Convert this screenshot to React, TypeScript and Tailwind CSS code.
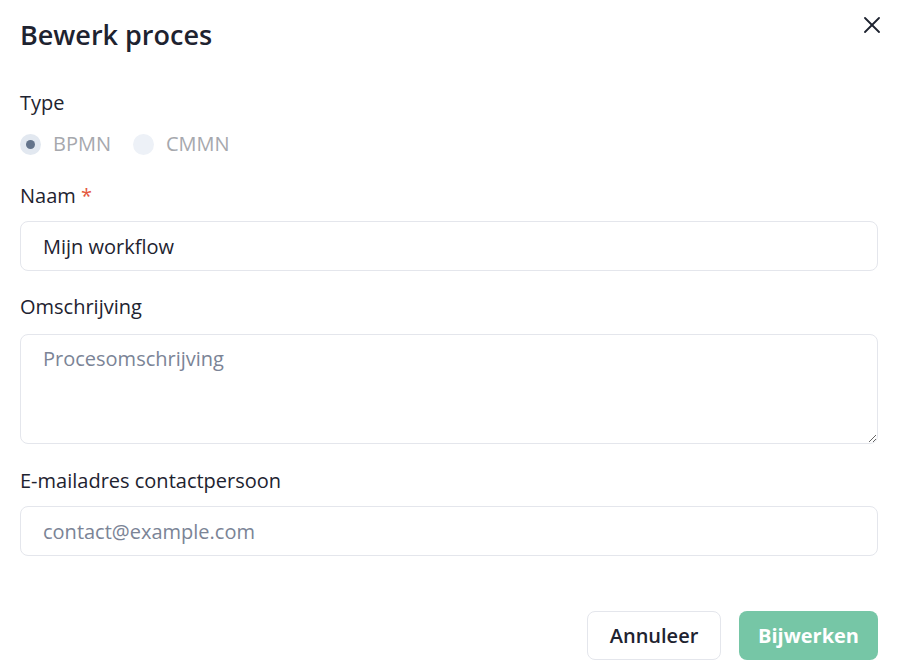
export default function App() {
  return (
    <div
      className="w-[901px] h-[672px] bg-white text-[#1e2330] overflow-hidden"
      style={{ fontFamily: '"Open Sans", sans-serif' }}
    >
      <div className="pl-5 pr-[23px] pt-[17px]">
        <div className="flex items-start justify-between">
          <h1 className="text-[27px] leading-[36px] font-semibold">Bewerk proces</h1>
          <button className="-mr-[2px] text-[#1e2330]">
            <svg width="16" height="16" viewBox="0 0 16 16" fill="none" stroke="currentColor" strokeWidth="1.8" strokeLinecap="round">
              <line x1="1" y1="1" x2="15" y2="15" />
              <line x1="15" y1="1" x2="1" y2="15" />
            </svg>
          </button>
        </div>

        <div className="mt-9">
          <div className="text-xl leading-[28px]">Type</div>
          <div className="mt-[13px] flex items-center text-xl leading-[28px] text-[#a6a8ad]">
            <label className="flex items-center gap-3">
              <span className="w-[21px] h-[21px] rounded-full bg-[#e2e8f0] flex items-center justify-center">
                <span className="w-[9px] h-[9px] rounded-full bg-[#64748b]" />
              </span>
              BPMN
            </label>
            <label className="ml-[22px] flex items-center gap-3">
              <span className="w-[21px] h-[21px] rounded-full bg-[#edf1f7]" />
              CMMN
            </label>
          </div>
        </div>

        <div className="mt-6">
          <div className="text-xl leading-[28px]">
            Naam <span className="text-[#e4573d]">*</span>
          </div>
          <input
            className="mt-[11px] block w-full h-[50px] rounded-lg border border-[#e4e6ec] px-[22px] text-xl outline-none"
            defaultValue="Mijn workflow"
          />
        </div>

        <div className="mt-[22px]">
          <div className="text-xl leading-[28px]">Omschrijving</div>
          <textarea
            className="mt-[13px] block w-full h-[110px] rounded-lg border border-[#e4e6ec] px-[22px] py-[10px] text-xl outline-none placeholder:text-[#7b8496]"
            placeholder="Procesomschrijving"
          />
        </div>

        <div className="mt-[23px]">
          <div className="text-xl leading-[28px]">E-mailadres contactpersoon</div>
          <input
            className="mt-[11px] block w-full h-[50px] rounded-lg border border-[#e4e6ec] px-[22px] text-xl outline-none placeholder:text-[#7b8496]"
            placeholder="contact@example.com"
          />
        </div>

        <div className="mt-[55px] flex justify-end gap-[18px]">
          <button className="h-[49px] w-[134px] rounded-lg border border-[#e4e6ec] bg-white text-xl font-semibold">
            Annuleer
          </button>
          <button className="h-[49px] w-[139px] rounded-lg bg-[#76c6a6] text-white text-xl font-bold">
            Bijwerken
          </button>
        </div>
      </div>
    </div>
  )
}
